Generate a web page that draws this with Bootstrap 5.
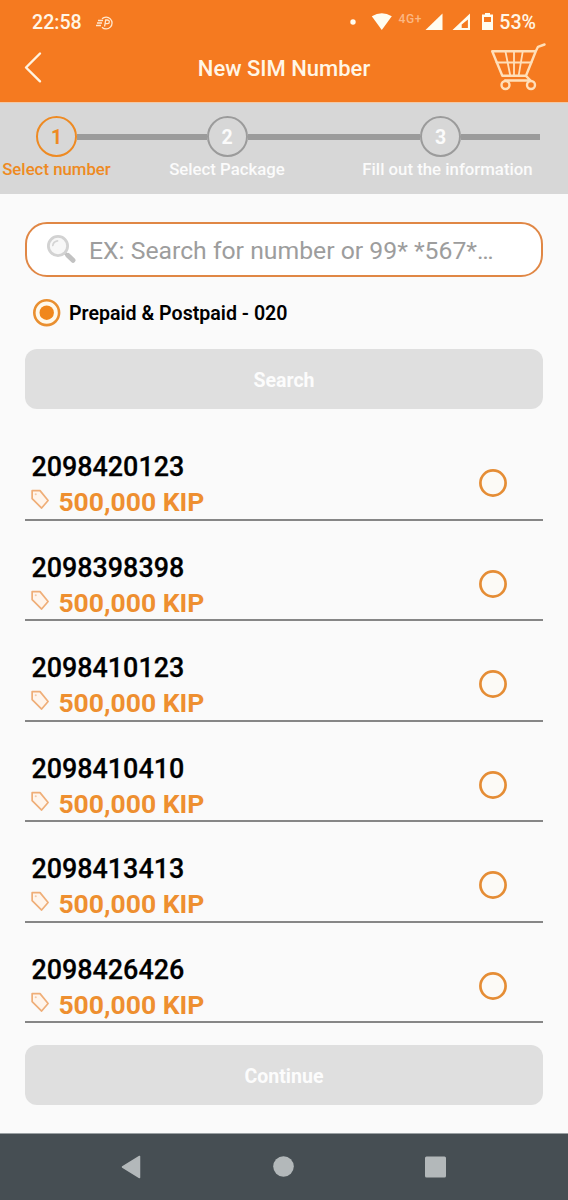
<!DOCTYPE html>
<html lang="en">
<head>
<meta charset="utf-8">
<meta name="viewport" content="width=device-width, initial-scale=1">
<title>New SIM Number</title>
<link href="https://cdn.jsdelivr.net/npm/bootstrap@5.3.0/dist/css/bootstrap.min.css" rel="stylesheet">
<style>
  body { font-family: Roboto, "Liberation Sans", sans-serif; background: #fafafa; color: #000; }
  .screen { width: 568px; height: 1200px; }
  .topbar { background: #f57a20; height: 102px; color: #fff6e6; }
  .statusbar { height: 44px; padding: 1px 32px 0; font-size: 19.6px; font-weight: 500; }
  .speed-icon { margin-left: 14px; }
  .charge { margin-left: 5px; }
  .titlebar { height: 58px; padding: 0 22px 8px 23px; }
  .screen-title { font-size: 22px; font-weight: 500; line-height: 1; }
  .stepper { background: #d7d7d7; height: 92px; padding: 13px 28px 0 0; color: #fbfbfb; border-top: 1px solid #f2c9a6; }
  .step-1 { width: 113px; } .step-2 { width: 228px; } .step-3 { width: 199px; }
  .rail { height: 6px; background: #9b9b9b; }
  .rail-none { background: transparent; }
  .node { width: 41px; height: 41px; border: 2.5px solid #9b9b9b; font-size: 19.5px; font-weight: 700; padding-top: 2px; }
  .step-on { color: #ee8a22; }
  .step-on .node { border-color: #ee8a22; }
  .step-label { font-size: 16.8px; font-weight: 500; line-height: 20px; margin-top: 2px; }
  .step-3 .step-label { padding-left: 14px; }
  .search-box { height: 55px; border: 2px solid #e08745; border-radius: 22px; padding: 0 20px; margin-top: 28px; background: #fff; }
  .search-box input, .search-box input:focus { font-size: 24.75px; font-weight: 400; background: none; box-shadow: none; line-height: 30px; margin: 2px 0 0 12px; }
  .search-box input::placeholder { color: #9d9d9d; opacity: 1; }
  .search-box svg { margin-left: -1px; }
  .type-row { height: 72px; padding-left: 8px; }
  .type-label { font-size: 19.6px; font-weight: 600; padding-top: 1px; }
  .wide-btn { height: 60px; border-radius: 12px; font-size: 19.5px; font-weight: 700; border: 0; padding-top: 9px; }
  .wide-btn:disabled { background: #dfdfdf; color: #fcfcfc; opacity: 1; }
  .gutters { padding: 0 25px; }
  .number-list { margin-top: 11px; }
  .number-row { height: 100.55px; border-bottom: 2px solid #868686; padding: 0 36px 0 6.4px; }
  .msisdn { font-size: 26.9px; font-weight: 500; line-height: 32px; margin-top: 31px; -webkit-text-stroke: .25px #000; }
  .price { font-size: 26.5px; font-weight: 700; line-height: 32px; color: #ee8f30; margin-top: 3px; gap: 8px; }
  .price svg { margin-top: 3px; }
  .radio-ring { margin-top: 28px; }
  .confirm { margin-top: 22px; }
  .sysbar { background: #464e53; height: 67px; border-top: 1px solid #9aa0a3; padding: 0 56px; }
</style>
</head>
<body>
<svg width="0" height="0" class="position-absolute" aria-hidden="true">
  <symbol id="tag" viewBox="0 0 20 21"><path d="M1.2 1.2H9.5L18 11.6L11.2 19.5L1.2 9.6Z" fill="#fff5ec" stroke="#efae78" stroke-width="1.8" stroke-linejoin="round"/><circle cx="5" cy="5" r="1.1" fill="#f5cba8"/></symbol>
  <symbol id="ring" viewBox="0 0 28 28"><circle cx="14" cy="14" r="12.6" fill="#fcfaf6" stroke="#e58d35" stroke-width="2.7"/></symbol>
</svg>
<main class="screen d-flex flex-column overflow-hidden">
  <header class="topbar">
    <div class="statusbar d-flex align-items-center">
      <span>22:58</span>
      <svg class="speed-icon" width="17" height="14" viewBox="0 0 17 14" fill="none" stroke="#ffe8cf" stroke-width="1.3"><path d="M6 2.8A5.9 5.9 0 1 1 6 11.2M2 4.5H7M1 7H6M0 9.5H5M8.6 10.5L9.7 4H11.5a1.8 1.8 0 0 1 0 3.7H9.2"/></svg>
      <svg class="ms-auto" width="145" height="22" viewBox="0 0 145 22" fill="#fffdf0">
        <circle cx="4" cy="10" r="2.7"/>
        <path d="M22.8 4.2Q32.8-1.5 42.8 4.2L32.8 18Z"/>
        <text x="49.5" y="10.5" font-size="12" font-weight="500" fill="#fbb783" textLength="23">4G+</text>
        <path d="M76.5 18L93.5 1.5V18Z"/>
        <path fill-rule="evenodd" d="M103.5 18L121 1.5V18ZM112.7 16H118.9V7.5L112.7 12.6Z"/>
        <path fill-rule="evenodd" d="M136 .9h5v1.6h3v15.5h-11V2.5h3ZM135 5v5h7v-5Z"/>
      </svg>
      <span class="charge">53%</span>
    </div>
    <div class="titlebar d-flex align-items-center justify-content-between">
      <svg class="mb-1" width="54" height="32" viewBox="0 0 54 32" fill="none" stroke="#fff3df" stroke-width="2.4" stroke-linecap="round" stroke-linejoin="round"><path d="M17 2.5L3 16.5L17 30.3"/></svg>
      <h1 class="screen-title m-0">New SIM Number</h1>
      <svg class="mb-1" width="55" height="48" viewBox="0 0 55 48" fill="none" stroke="#ffdfb9" stroke-width="2" stroke-linecap="round" stroke-linejoin="round"><path stroke-width="2.4" d="M53.5 1.5L47 3.8L44.8 8.2H1.2L11.3 32.8H35L44.8 8.2M35 32.8L39.5 37.5H14"/><path stroke-width="1.8" d="M5.5 19.5H40.5M14.4 8.2L19.3 32.8M23 8.2V32.8M31.8 8.2L27.6 32.8"/><circle cx="14.5" cy="42" r="4" stroke-width="2.4"/><circle cx="40" cy="42" r="4" stroke-width="2.4"/></svg>
    </div>
  </header>

  <nav class="stepper d-flex text-center">
    <div class="step-1 step-on">
      <div class="d-flex align-items-center"><div class="rail rail-none flex-fill"></div><div class="node rounded-circle d-flex align-items-center justify-content-center">1</div><div class="rail flex-fill"></div></div>
      <div class="step-label text-nowrap">Select number</div>
    </div>
    <div class="step-2">
      <div class="d-flex align-items-center"><div class="rail flex-fill"></div><div class="node rounded-circle d-flex align-items-center justify-content-center">2</div><div class="rail flex-fill"></div></div>
      <div class="step-label text-nowrap">Select Package</div>
    </div>
    <div class="step-3">
      <div class="d-flex align-items-center"><div class="rail flex-fill"></div><div class="node rounded-circle d-flex align-items-center justify-content-center">3</div><div class="rail flex-fill"></div></div>
      <div class="step-label text-nowrap">Fill out the information</div>
    </div>
  </nav>

  <section class="gutters">
    <div class="search-box d-flex align-items-center">
      <svg class="flex-shrink-0" width="31" height="31" viewBox="0 0 31 31" fill="none"><path d="M18.5 18.5L22 22" stroke="#bcbcbc" stroke-width="3"/><path d="M22 21.5L27 26.3" stroke="#c2c2c2" stroke-width="5" stroke-linecap="round"/><circle cx="12" cy="12" r="9.6" fill="#f7f7f7" stroke="#d2d2d2" stroke-width="2.8"/><path d="M6.8 11.5Q7.3 7.5 11.5 6.8" stroke="#d4d4d4" stroke-width="1.7" stroke-linecap="round"/></svg>
      <input type="text" class="form-control border-0 p-0" placeholder="EX: Search for number or 99* *567*…">
    </div>
    <div class="type-row d-flex align-items-center gap-2">
      <svg width="28" height="28" viewBox="0 0 28 28"><circle cx="13.7" cy="13.7" r="12.4" fill="#fff9eb" stroke="#e98f30" stroke-width="2.6"/><circle cx="13.7" cy="13.7" r="7.2" fill="#f0871c"/></svg>
      <span class="type-label">Prepaid &amp; Postpaid - 020</span>
    </div>
    <button class="btn wide-btn w-100 d-block" disabled>Search</button>
  </section>

  <section class="gutters">
    <div class="number-list">
      <div class="number-row d-flex justify-content-between"><div><div class="msisdn">2098420123</div><div class="price d-flex"><svg width="19" height="21"><use href="#tag"/></svg><span>500,000 KIP</span></div></div><svg class="radio-ring align-self-center" width="28" height="28"><use href="#ring"/></svg></div>
      <div class="number-row d-flex justify-content-between"><div><div class="msisdn">2098398398</div><div class="price d-flex"><svg width="19" height="21"><use href="#tag"/></svg><span>500,000 KIP</span></div></div><svg class="radio-ring align-self-center" width="28" height="28"><use href="#ring"/></svg></div>
      <div class="number-row d-flex justify-content-between"><div><div class="msisdn">2098410123</div><div class="price d-flex"><svg width="19" height="21"><use href="#tag"/></svg><span>500,000 KIP</span></div></div><svg class="radio-ring align-self-center" width="28" height="28"><use href="#ring"/></svg></div>
      <div class="number-row d-flex justify-content-between"><div><div class="msisdn">2098410410</div><div class="price d-flex"><svg width="19" height="21"><use href="#tag"/></svg><span>500,000 KIP</span></div></div><svg class="radio-ring align-self-center" width="28" height="28"><use href="#ring"/></svg></div>
      <div class="number-row d-flex justify-content-between"><div><div class="msisdn">2098413413</div><div class="price d-flex"><svg width="19" height="21"><use href="#tag"/></svg><span>500,000 KIP</span></div></div><svg class="radio-ring align-self-center" width="28" height="28"><use href="#ring"/></svg></div>
      <div class="number-row d-flex justify-content-between"><div><div class="msisdn">2098426426</div><div class="price d-flex"><svg width="19" height="21"><use href="#tag"/></svg><span>500,000 KIP</span></div></div><svg class="radio-ring align-self-center" width="28" height="28"><use href="#ring"/></svg></div>
    </div>
    <button class="btn wide-btn confirm w-100 d-block" disabled>Continue</button>
  </section>

  <footer class="sysbar mt-auto d-flex align-items-center justify-content-around">
    <svg width="20" height="24" viewBox="0 0 20 24"><path d="M18.5 1.5V22.5L1.5 12Z" fill="#b3b8ba" stroke="#b3b8ba" stroke-width="1.5" stroke-linejoin="round"/></svg>
    <svg width="22" height="22" viewBox="0 0 22 22"><circle cx="11.5" cy="10.5" r="10.3" fill="#b3b8ba"/></svg>
    <svg width="22" height="22" viewBox="0 0 22 22"><rect x="0" y=".5" width="21" height="21" rx="1.5" fill="#b3b8ba"/></svg>
  </footer>
</main>
<script src="https://cdn.jsdelivr.net/npm/bootstrap@5.3.0/dist/js/bootstrap.bundle.min.js"></script>
</body>
</html>
